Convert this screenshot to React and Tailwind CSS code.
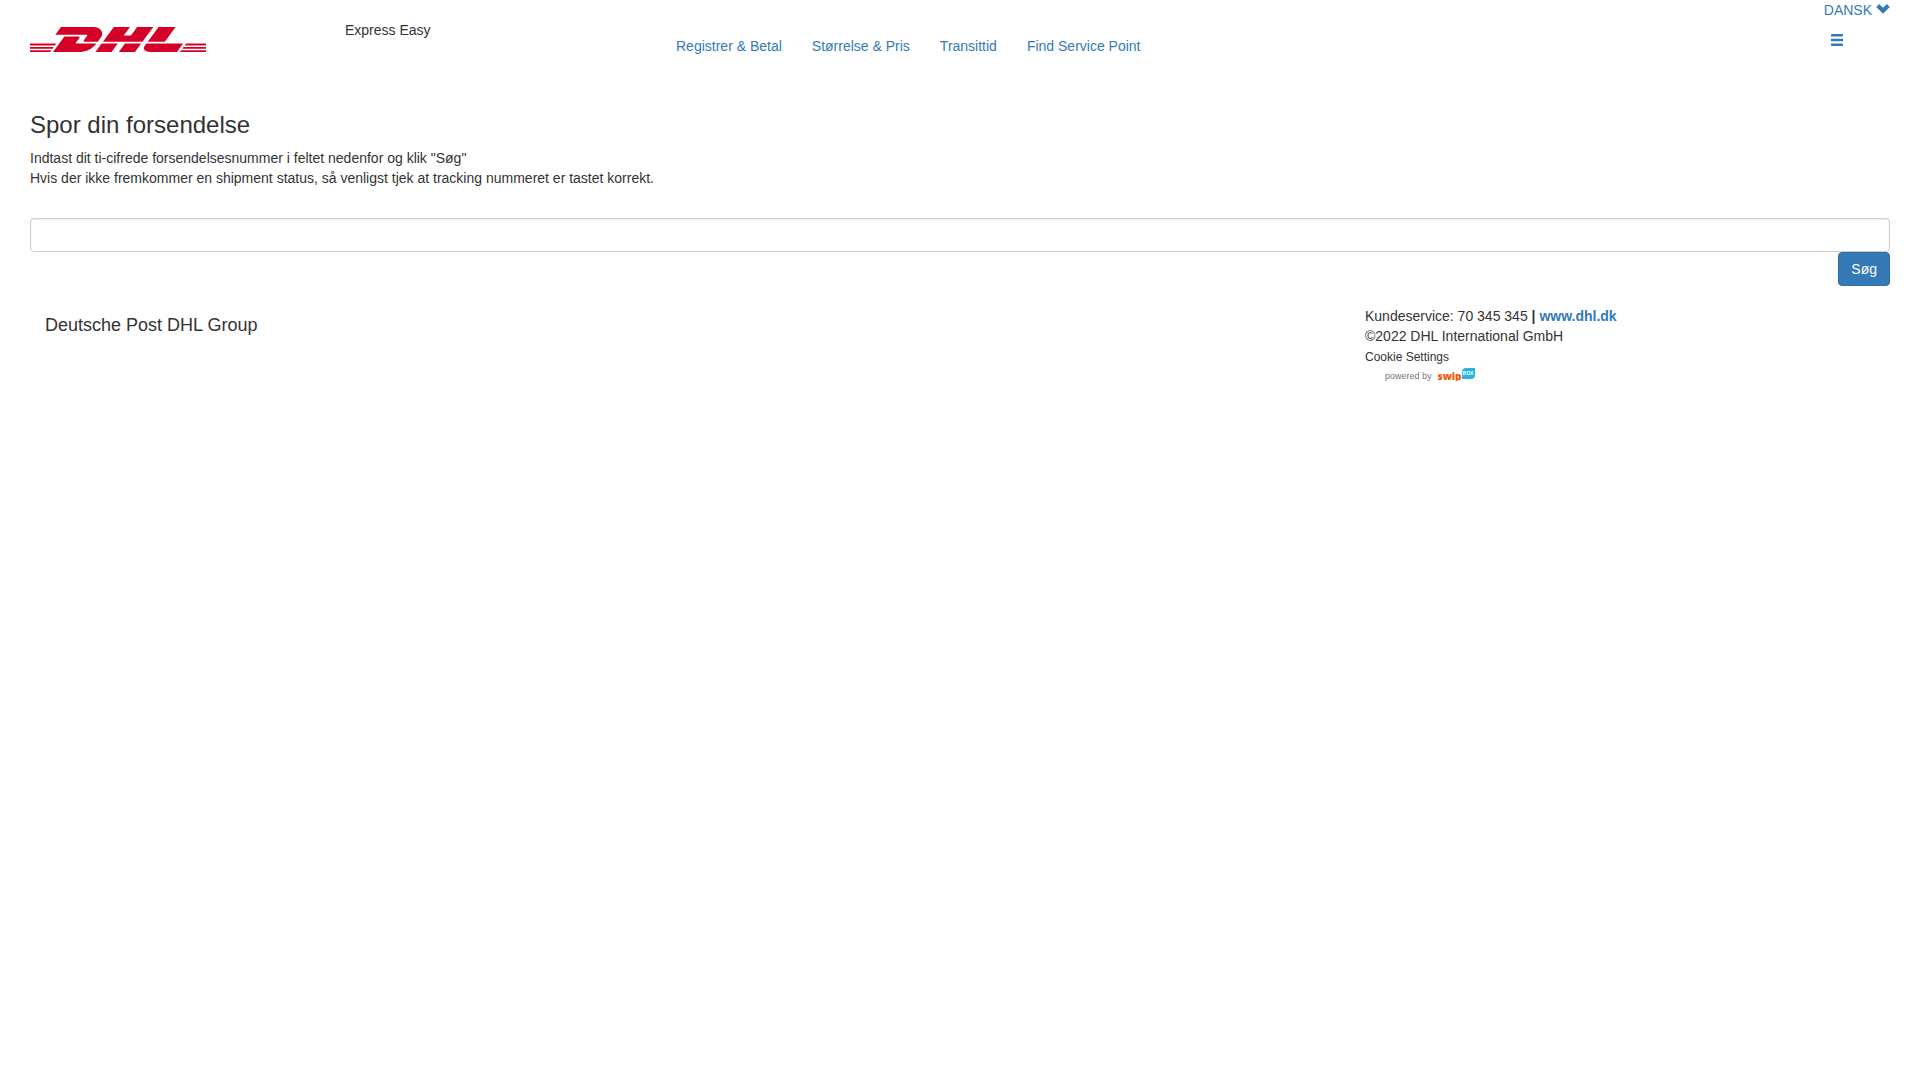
import React from 'react';
import { SiDhl } from 'react-icons/si';

const navLinks = ['Registrer & Betal', 'Størrelse & Pris', 'Transittid', 'Find Service Point'];

const linkStyle = 'text-[#337ab7] hover:text-[#23527c] hover:underline';

const ChevronDown = () => (
  <svg className="inline-block w-3.5 h-3.5" viewBox="0 0 14 14" fill="currentColor" aria-hidden="true">
    <path d="M0.2 4L3.1 1L7 4.8L10.9 1L13.8 4L7 10.7Z" />
  </svg>
);

const MenuBars = () => (
  <svg className="w-3.5 h-3.5" viewBox="0 0 14 14" fill="currentColor" aria-hidden="true">
    <rect x="1" y="1" width="12" height="2.6" rx="0.4" />
    <rect x="1" y="5.7" width="12" height="2.6" rx="0.4" />
    <rect x="1" y="10.4" width="12" height="2.6" rx="0.4" />
  </svg>
);

const SwipBox = () => (
  <span className="flex items-start">
    <span className="pt-[3px] text-[10px] leading-[10px] font-extrabold text-[#f4590f] font-['Open_Sans',sans-serif]">swip</span>
    <span className="flex items-center justify-center w-[13px] h-[11px] rounded-tl-sm rounded-br-sm bg-[#29b6dc] text-white text-[5px] leading-none font-bold">
      BOX
    </span>
  </span>
);

const Header = () => (
  <header className="flex items-start h-[98px]">
    <a href="#home" aria-label="DHL" className="w-[315px] pt-[27px]">
      <SiDhl className="w-44 h-[25px] text-[#d40028]" viewBox="0 10.3 24 3.4" />
    </a>
    <span className="w-[331px] pt-5">Express Easy</span>
    <nav className="flex gap-[30px] pt-9">
      {navLinks.map((label) => (
        <a key={label} href="#nav" className={linkStyle}>{label}</a>
      ))}
    </nav>
    <div className="ml-auto flex flex-col">
      <button className={`flex items-center gap-1 cursor-pointer ${linkStyle}`}>
        DANSK <ChevronDown />
      </button>
      <button aria-label="Menu" className={`w-fit ml-1.5 mt-[13px] cursor-pointer ${linkStyle}`}>
        <MenuBars />
      </button>
    </div>
  </header>
);

const TrackingForm = () => (
  <main className="pt-3.5">
    <h1 className="text-2xl leading-[26px] mb-2.5">Spor din forsendelse</h1>
    <p>
      Indtast dit ti-cifrede forsendelsesnummer i feltet nedenfor og klik "Søg"
      <br />
      Hvis der ikke fremkommer en shipment status, så venligst tjek at tracking nummeret er tastet korrekt.
    </p>
    <form className="flex flex-col items-end mt-[30px]" onSubmit={(e) => e.preventDefault()}>
      <input
        type="text"
        aria-label="Forsendelsesnummer"
        className="w-full h-[34px] px-3 rounded-sm border border-[#ccc] shadow-[inset_0_1px_1px_rgba(0,0,0,0.075)]"
      />
      <button type="submit" className="h-[34px] px-3 rounded-sm border border-[#2e6da4] bg-[#337ab7] text-white cursor-pointer">
        Søg
      </button>
    </form>
  </main>
);

const Footer = () => (
  <footer className="flex items-start pl-[15px] pt-5">
    <h2 className="w-[1320px] pt-[9px] text-lg leading-5">Deutsche Post DHL Group</h2>
    <div>
      <p>
        Kundeservice: 70 345 345 <b>| <a href="#dhl" className={linkStyle}>www.dhl.dk</a></b>
      </p>
      <p>©2022 DHL International GmbH</p>
      <button className="block text-xs leading-[22px] cursor-pointer">Cookie Settings</button>
      <div className="flex items-start gap-1.5 pl-5">
        <span className="pt-[3px] text-[9px] leading-[10px] text-[#777]">powered by</span>
        <SwipBox />
      </div>
    </div>
  </footer>
);

const App = () => (
  <div className="px-[30px] bg-white text-[#333] text-sm leading-5 font-['Liberation_Sans',Arial,sans-serif]">
    <Header />
    <TrackingForm />
    <Footer />
  </div>
);

export default App;
